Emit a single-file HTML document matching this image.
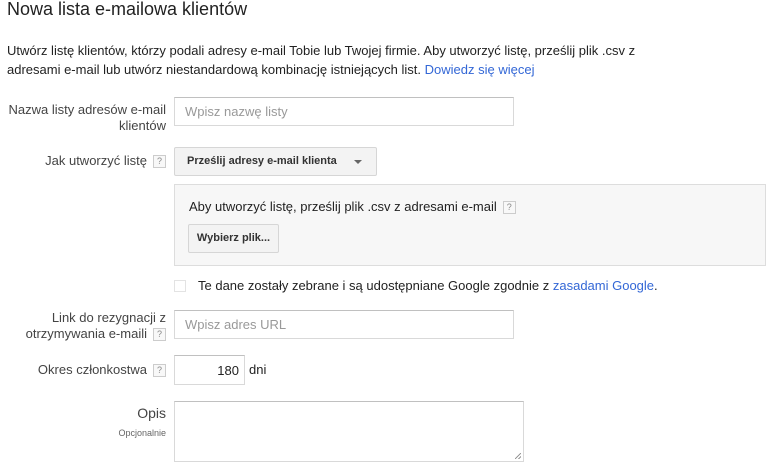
<!DOCTYPE html>
<html><head><meta charset="utf-8"><style>
body{margin:0;width:781px;height:472px;background:#fff;font-family:"Liberation Sans",Arial,sans-serif;color:#222;position:relative;overflow:hidden}
.a{position:absolute;white-space:nowrap}
.lbl{position:absolute;right:615px;text-align:right;font-size:13px;color:#444;line-height:16px}
.inp{position:absolute;border:1px solid #d9d9d9;border-top-color:#c0c0c0;background:#fff;box-sizing:border-box;font-size:13px;color:#999;padding-left:10px}
.q{display:inline-block;width:11px;height:11px;border:1px solid #ccc;font-size:9px;color:#888;text-align:center;line-height:11px;vertical-align:middle;margin-left:6px;background:#f8f8f8}
.btn{position:absolute;border:1px solid #d6d6d6;border-radius:2px;background:#f3f3f3;box-sizing:border-box;font-size:11px;font-weight:bold;color:#333}
a{color:#3367d6;text-decoration:none}
</style></head><body>
<div class="a" style="left:7px;top:-1px;font-size:18px;color:#222">Nowa lista e-mailowa klientów</div>
<div class="a" style="left:7px;top:41px;font-size:13px;line-height:19px;color:#222">Utwórz listę klientów, którzy podali adresy e-mail Tobie lub Twojej firmie. Aby utworzyć listę, prześlij plik .csv z<br>adresami e-mail lub utwórz niestandardową kombinację istniejących list. <a>Dowiedz się więcej</a></div>

<div class="lbl" style="top:102px">Nazwa listy adresów e-mail<br>klientów</div>
<div class="inp" style="left:174px;top:97px;width:340px;height:29px;line-height:27px">Wpisz nazwę listy</div>

<div class="lbl" style="top:153px">Jak utworzyć listę<span class="q">?</span></div>
<div class="btn" style="left:174px;top:147px;width:203px;height:29px;line-height:27px;padding-left:12px">Prześlij adresy e-mail klienta<span style="position:absolute;right:14px;top:12px;border-left:4px solid transparent;border-right:4px solid transparent;border-top:4px solid #666"></span></div>

<div class="a" style="left:174px;top:184px;width:592px;height:82px;background:#f7f7f7;border:1px solid #ddd;box-sizing:border-box"></div>
<div class="a" style="left:189px;top:199px;font-size:13px;color:#222">Aby utworzyć listę, prześlij plik .csv z adresami e-mail<span class="q">?</span></div>
<div class="btn" style="left:188px;top:224px;width:91px;height:29px;line-height:27px;text-align:center">Wybierz plik...</div>

<div class="a" style="left:174px;top:280px;width:12px;height:12px;border:1px solid #e3e3e3;box-sizing:border-box"></div>
<div class="a" style="left:198px;top:278px;font-size:13px;color:#222">Te dane zostały zebrane i są udostępniane Google zgodnie z <a>zasadami Google</a>.</div>

<div class="lbl" style="top:310px">Link do rezygnacji z<br>otrzymywania e-maili<span class="q">?</span></div>
<div class="inp" style="left:174px;top:310px;width:340px;height:29px;line-height:27px">Wpisz adres URL</div>

<div class="lbl" style="top:362px">Okres członkostwa<span class="q">?</span></div>
<div class="inp" style="left:174px;top:355px;width:71px;height:30px;line-height:29px;text-align:right;padding-right:5px;color:#222">180</div>
<div class="a" style="left:249px;top:362px;font-size:13px;color:#222">dni</div>

<div class="lbl" style="top:405px;font-size:14px">Opis</div>
<div class="lbl" style="top:425px;font-size:9px;color:#666">Opcjonalnie</div>
<div class="inp" style="left:174px;top:401px;width:350px;height:61px"><span style="position:absolute;right:2px;bottom:2px;width:6px;height:6px;background:linear-gradient(135deg,transparent 45%,#999 45%,#999 55%,transparent 55%,transparent 75%,#999 75%,#999 85%,transparent 85%)"></span></div>
</body></html>
